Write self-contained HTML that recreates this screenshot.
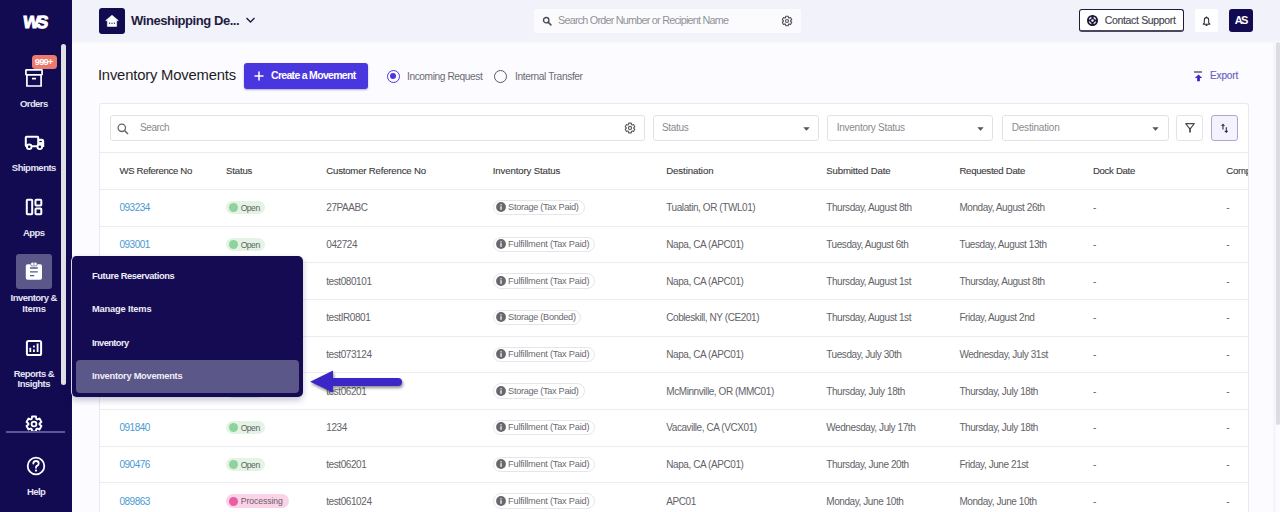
<!DOCTYPE html>
<html><head><meta charset="utf-8"><title>Inventory Movements</title>
<style>
html,body{margin:0;padding:0;}
body{width:1280px;height:512px;overflow:hidden;position:relative;background:#fcfbff;font-family:"Liberation Sans", sans-serif;}
.t{position:absolute;white-space:nowrap;line-height:1;font-family:"Liberation Sans", sans-serif;}
.b{position:absolute;}
.clip{position:absolute;overflow:hidden;}
</style></head><body>
<div class="b" style="left:71.50px;top:0.00px;width:1208.50px;height:41.00px;background:#f2f2fb"></div>
<div class="b" style="left:71.50px;top:41.00px;width:1201.30px;height:471.00px;background:#fcfbff"></div>
<div class="b" style="left:71.50px;top:41.00px;width:1201.30px;height:2.50px;background:linear-gradient(#f3f3f8,#fcfbff)"></div>
<div class="b" style="left:1272.80px;top:41.00px;width:3.20px;height:471.00px;background:#f6f5fb"></div>
<div class="b" style="left:1276.00px;top:41.70px;width:4.00px;height:383.70px;background:#dcdce2;border-radius:2px"></div>
<div class="b" style="left:99.00px;top:7.50px;width:26.00px;height:26.00px;background:#130b52;border-radius:3px"></div>
<svg class="b" style="left:103px;top:11.5px" width="18" height="18" viewBox="0 0 18 18">
<path d="M9 3.2 L15.3 8.6 L13.6 8.6 L13.6 14.4 L4.4 14.4 L4.4 8.6 L2.7 8.6 Z" fill="#fff" stroke="#fff" stroke-width="0.6" stroke-linejoin="round"/>
<circle cx="6.6" cy="11.2" r="0.65" fill="#130b52"/><circle cx="9" cy="11.2" r="0.65" fill="#130b52"/><circle cx="11.4" cy="11.2" r="0.65" fill="#130b52"/>
</svg>
<div class="t" style="left:131.00px;top:14.00px;font-size:13px;color:#1f1c40;font-weight:bold;letter-spacing:-0.444px;">Wineshipping De...</div>
<svg class="b" style="left:245px;top:16px" width="11" height="8" viewBox="0 0 11 8"><path d="M1.5 2 L5.5 6 L9.5 2" stroke="#1f1c40" stroke-width="1.4" fill="none"/></svg>
<div class="b" style="left:534.00px;top:9.00px;width:266.50px;height:23.80px;background:#fbfbfe;border-radius:2px"></div>
<svg class="b" style="left:542px;top:15.5px" width="11" height="11" viewBox="0 0 11 11"><circle cx="4.2" cy="4.2" r="2.7" stroke="#4a4a52" stroke-width="1.4" fill="none"/><path d="M6.2 6.2 L8.9 8.9" stroke="#4a4a52" stroke-width="1.6" stroke-linecap="round"/></svg>
<div class="t" style="left:558.00px;top:15.36px;font-size:10.8px;color:#929297;font-weight:normal;letter-spacing:-0.767px;">Search Order Number or Recipient Name</div>
<svg class="b" style="left:781.25px;top:14.6px" width="12" height="12" viewBox="0 0 12 12"><path d="M4.53 2.72 L4.74 1.26 L7.26 1.26 L7.47 2.72 L8.11 3.08 L9.47 2.54 L10.73 4.72 L9.58 5.63 L9.58 6.37 L10.73 7.28 L9.47 9.46 L8.11 8.92 L7.47 9.28 L7.26 10.74 L4.74 10.74 L4.53 9.28 L3.89 8.92 L2.53 9.46 L1.27 7.28 L2.42 6.37 L2.42 5.63 L1.27 4.72 L2.53 2.54 L3.89 3.08 Z" stroke="#505058" stroke-width="1.15" fill="none" stroke-linejoin="round"/><circle cx="6" cy="6" r="1.5" stroke="#505058" stroke-width="1.1" fill="none"/></svg>
<div class="b" style="left:1079.00px;top:9.00px;width:105.00px;height:23.30px;border:1.5px solid #1e1b3b;border-bottom:2px solid #4a485e;border-radius:3px;box-sizing:border-box;background:#fff"></div>
<svg class="b" style="left:1087px;top:15px" width="11" height="11" viewBox="0 0 11 11"><circle cx="5.5" cy="5.5" r="4.6" stroke="#1a1836" stroke-width="1.8" fill="none"/><circle cx="5.5" cy="5.5" r="1.9" stroke="#1a1836" stroke-width="1.3" fill="none"/><path d="M5.5 0.8 L5.5 3.6 M5.5 7.4 L5.5 10.2 M0.8 5.5 L3.6 5.5 M7.4 5.5 L10.2 5.5" stroke="#1a1836" stroke-width="2.2"/></svg>
<div class="t" style="left:1104.70px;top:15.21px;font-size:10.5px;color:#46454f;font-weight:normal;letter-spacing:-0.333px;-webkit-text-stroke:0.15px #46454f;">Contact Support</div>
<div class="b" style="left:1194.50px;top:9.00px;width:23.90px;height:23.00px;background:#fff;border-radius:2px"></div>
<svg class="b" style="left:1202px;top:15.5px" width="9" height="11" viewBox="0 0 9 11"><path d="M4.5 1.6 C2.9 1.6 2.3 2.9 2.3 4.3 L2.3 6.9 L1.2 8.2 L7.8 8.2 L6.7 6.9 L6.7 4.3 C6.7 2.9 6.1 1.6 4.5 1.6 Z" stroke="#2a2a33" stroke-width="1.05" fill="none" stroke-linejoin="round"/><path d="M4.5 0.6 L4.5 1.6 M3.6 9.4 L5.4 9.4" stroke="#2a2a33" stroke-width="1.1"/></svg>
<div class="b" style="left:1229.40px;top:9.00px;width:23.60px;height:23.00px;background:#130b52;border-radius:3px"></div>
<div class="t" style="left:1234.80px;top:14.69px;font-size:11px;color:#fff;font-weight:bold;letter-spacing:-1.844px;">AS</div>
<div class="t" style="left:97.90px;top:68.27px;font-size:14.8px;color:#1c1c1f;font-weight:normal;letter-spacing:-0.175px;">Inventory Movements</div>
<div class="b" style="left:244.00px;top:63.20px;width:124.00px;height:25.80px;background:#4a36de;border-radius:3px;box-shadow:0 1px 2px rgba(40,20,150,.35)"></div>
<svg class="b" style="left:253.5px;top:71px" width="10" height="10" viewBox="0 0 10 10"><path d="M5 0.5 L5 9.5 M0.5 5 L9.5 5" stroke="#fff" stroke-width="1.5"/></svg>
<div class="t" style="left:271.00px;top:70.21px;font-size:10.5px;color:#fff;font-weight:bold;letter-spacing:-0.693px;">Create a Movement</div>
<div class="b" style="left:386.70px;top:69.50px;width:13.20px;height:13.20px;border:1.6px solid #4a36de;border-radius:50%;box-sizing:border-box"></div>
<div class="b" style="left:390.20px;top:73.00px;width:6.20px;height:6.20px;background:#4a36de;border-radius:50%"></div>
<div class="t" style="left:407.00px;top:71.87px;font-size:10.2px;color:#6b6b70;font-weight:normal;letter-spacing:-0.419px;">Incoming Request</div>
<div class="b" style="left:493.80px;top:69.50px;width:13.40px;height:13.40px;border:1.5px solid #5a5a60;border-radius:50%;box-sizing:border-box"></div>
<div class="t" style="left:515.00px;top:71.87px;font-size:10.2px;color:#6b6b70;font-weight:normal;letter-spacing:-0.386px;">Internal Transfer</div>
<div class="b" style="left:1193.90px;top:71.10px;width:8.00px;height:1.70px;background:#85858c"></div>
<svg class="b" style="left:1193.5px;top:73.5px" width="9" height="8.5" viewBox="0 0 9 8.5"><path d="M4.5 0.4 L8.2 4 L5.9 4 L5.9 7.3 L3.1 7.3 L3.1 4 L0.8 4 Z" fill="#3c28d0"/></svg>
<div class="t" style="left:1210.00px;top:71.13px;font-size:10px;color:#6860c2;font-weight:normal;letter-spacing:-0.145px;-webkit-text-stroke:0.15px #6860c2;">Export</div>
<div class="b" style="left:98.60px;top:103.00px;width:1150.00px;height:427.00px;background:#fff;border:1px solid #e8e8ee;border-radius:3px;box-sizing:border-box"></div>
<div class="b" style="left:99.60px;top:152.00px;width:1148.00px;height:1.00px;background:#ececf0"></div>
<div class="b" style="left:110.30px;top:114.50px;width:534.30px;height:26.50px;border:1px solid #e2e2e6;border-radius:3px;box-sizing:border-box;background:#fff"></div><div class="t" style="left:140.00px;top:123.44px;font-size:10px;color:#8a8a8f;font-weight:normal;letter-spacing:-0.425px;">Search</div>
<svg class="b" style="left:116.5px;top:122.5px" width="12" height="12" viewBox="0 0 12 12"><circle cx="4.8" cy="4.8" r="3.7" stroke="#666" stroke-width="1.3" fill="none"/><path d="M7.5 7.5 L11 11" stroke="#666" stroke-width="1.5"/></svg>
<svg class="b" style="left:624px;top:122px" width="12" height="12" viewBox="0 0 12 12"><path d="M4.48 2.62 L4.72 1.17 L7.28 1.17 L7.52 2.62 L8.17 3.00 L9.54 2.47 L10.83 4.70 L9.68 5.62 L9.68 6.38 L10.83 7.30 L9.54 9.53 L8.17 9.00 L7.52 9.38 L7.28 10.83 L4.72 10.83 L4.48 9.38 L3.83 9.00 L2.46 9.53 L1.17 7.30 L2.32 6.38 L2.32 5.62 L1.17 4.70 L2.46 2.47 L3.83 3.00 Z" stroke="#5a5a60" stroke-width="1.1" fill="none" stroke-linejoin="round"/><circle cx="6" cy="6" r="1.6" stroke="#5a5a60" stroke-width="1.1" fill="none"/></svg>
<div class="b" style="left:652.50px;top:114.50px;width:166.90px;height:26.50px;border:1px solid #e2e2e6;border-radius:3px;box-sizing:border-box;background:#fff"></div><div class="t" style="left:662.00px;top:123.44px;font-size:10px;color:#8a8a8f;font-weight:normal;letter-spacing:-0.330px;">Status</div><svg class="b" style="left:803.20px;top:126.5px" width="7" height="4" viewBox="0 0 7 4"><path d="M0.3 0.3 L6.7 0.3 L3.5 3.7 Z" fill="#555"/></svg>
<div class="b" style="left:827.30px;top:114.50px;width:166.20px;height:26.50px;border:1px solid #e2e2e6;border-radius:3px;box-sizing:border-box;background:#fff"></div><div class="t" style="left:836.80px;top:123.44px;font-size:10px;color:#8a8a8f;font-weight:normal;letter-spacing:-0.271px;">Inventory Status</div><svg class="b" style="left:977.30px;top:126.5px" width="7" height="4" viewBox="0 0 7 4"><path d="M0.3 0.3 L6.7 0.3 L3.5 3.7 Z" fill="#555"/></svg>
<div class="b" style="left:1002.20px;top:114.50px;width:166.40px;height:26.50px;border:1px solid #e2e2e6;border-radius:3px;box-sizing:border-box;background:#fff"></div><div class="t" style="left:1011.70px;top:123.44px;font-size:10px;color:#8a8a8f;font-weight:normal;letter-spacing:-0.197px;">Destination</div><svg class="b" style="left:1152.40px;top:126.5px" width="7" height="4" viewBox="0 0 7 4"><path d="M0.3 0.3 L6.7 0.3 L3.5 3.7 Z" fill="#555"/></svg>
<div class="b" style="left:1176.30px;top:114.50px;width:26.70px;height:26.50px;border:1.3px solid #e4e4e8;border-radius:3px;box-sizing:border-box;background:#fff"></div>
<svg class="b" style="left:1184px;top:122px" width="12" height="12" viewBox="0 0 12 12"><path d="M1.7 1.6 L10.3 1.6 L6.6 6.4 L5.4 6.4 Z" stroke="#4a4a50" stroke-width="1.1" fill="none" stroke-linejoin="round"/><path d="M6 6.2 L6 10.6" stroke="#3a3a40" stroke-width="1.6"/></svg>
<div class="b" style="left:1211.20px;top:114.50px;width:26.80px;height:26.50px;border:1.3px solid #aaa6d6;border-radius:3px;box-sizing:border-box;background:#f4f3fd"></div>
<svg class="b" style="left:1219px;top:121.5px" width="11" height="12" viewBox="0 0 11 12"><path d="M4 7.6 L4 3.2" stroke="#2a2a50" stroke-width="1.1"/><path d="M2.5 3.6 L4 1.9 L5.5 3.6 Z" fill="#2a2a50" stroke="#2a2a50" stroke-width="0.6" stroke-linejoin="round"/><path d="M7.3 5.3 L7.3 9.5" stroke="#2a2a50" stroke-width="1.1"/><path d="M5.8 9.1 L7.3 10.8 L8.8 9.1 Z" fill="#2a2a50" stroke="#2a2a50" stroke-width="0.6" stroke-linejoin="round"/></svg>
<div class="clip" style="left:99.6px;top:153.1px;width:1148px;height:360px">
<div class="t" style="left:19.90px;top:12.87px;font-size:9.6px;color:#3b3b40;font-weight:normal;letter-spacing:-0.327px;-webkit-text-stroke:0.12px #3b3b40;">WS Reference No</div>
<div class="t" style="left:126.50px;top:12.87px;font-size:9.6px;color:#3b3b40;font-weight:normal;letter-spacing:-0.180px;-webkit-text-stroke:0.12px #3b3b40;">Status</div>
<div class="t" style="left:226.65px;top:12.87px;font-size:9.6px;color:#3b3b40;font-weight:normal;letter-spacing:-0.185px;-webkit-text-stroke:0.12px #3b3b40;">Customer Reference No</div>
<div class="t" style="left:393.20px;top:12.87px;font-size:9.6px;color:#3b3b40;font-weight:normal;letter-spacing:-0.115px;-webkit-text-stroke:0.12px #3b3b40;">Inventory Status</div>
<div class="t" style="left:566.65px;top:12.87px;font-size:9.6px;color:#3b3b40;font-weight:normal;letter-spacing:-0.076px;-webkit-text-stroke:0.12px #3b3b40;">Destination</div>
<div class="t" style="left:726.65px;top:12.87px;font-size:9.6px;color:#3b3b40;font-weight:normal;letter-spacing:-0.138px;-webkit-text-stroke:0.12px #3b3b40;">Submitted Date</div>
<div class="t" style="left:859.80px;top:12.87px;font-size:9.6px;color:#3b3b40;font-weight:normal;letter-spacing:-0.261px;-webkit-text-stroke:0.12px #3b3b40;">Requested Date</div>
<div class="t" style="left:993.30px;top:12.87px;font-size:9.6px;color:#3b3b40;font-weight:normal;letter-spacing:-0.294px;-webkit-text-stroke:0.12px #3b3b40;">Dock Date</div>
<div class="t" style="left:1126.60px;top:12.87px;font-size:9.6px;color:#3b3b40;font-weight:normal;letter-spacing:-0.200px;-webkit-text-stroke:0.12px #3b3b40;">Completed Date</div>
<div class="b" style="left:0.00px;top:35.90px;width:1148.00px;height:1.00px;background:#ececf0"></div>
<div class="t" style="left:19.90px;top:50.24px;font-size:10px;color:#4a9ad2;font-weight:normal;letter-spacing:-0.500px;">093234</div>
<div class="b" style="left:126.50px;top:47.70px;width:39.10px;height:13.50px;background:#e3f4e4;border-radius:7px"></div>
<div class="b" style="left:129.15px;top:49.95px;width:9.10px;height:9.10px;background:#90d29c;border-radius:50%"></div>
<div class="t" style="left:141.10px;top:50.72px;font-size:8.6px;color:#5f5f64;font-weight:normal;letter-spacing:-0.514px;">Open</div>
<div class="t" style="left:226.65px;top:50.24px;font-size:10px;color:#636368;font-weight:normal;letter-spacing:-0.420px;">27PAABC</div>
<div class="b" style="left:393.10px;top:46.65px;width:91.90px;height:15.40px;border:1px solid #e6e6ea;border-radius:8px;box-sizing:border-box;background:#fff"></div>
<svg class="b" style="left:396.10px;top:49.35px" width="10" height="10" viewBox="0 0 10 10"><circle cx="5" cy="5" r="4.9" fill="#67676d"/><rect x="4.4" y="4.2" width="1.25" height="3.6" fill="#fff"/><rect x="4.4" y="2.2" width="1.25" height="1.2" fill="#fff"/></svg>
<div class="t" style="left:408.50px;top:50.26px;font-size:9.2px;color:#6a6a70;font-weight:normal;letter-spacing:-0.319px;">Storage (Tax Paid)</div>
<div class="t" style="left:566.65px;top:50.24px;font-size:10px;color:#636368;font-weight:normal;letter-spacing:-0.420px;">Tualatin, OR (TWL01)</div>
<div class="t" style="left:726.65px;top:50.24px;font-size:10px;color:#636368;font-weight:normal;letter-spacing:-0.420px;">Thursday, August 8th</div>
<div class="t" style="left:859.80px;top:50.24px;font-size:10px;color:#636368;font-weight:normal;letter-spacing:-0.420px;">Monday, August 26th</div>
<div class="t" style="left:993.30px;top:50.24px;font-size:10px;color:#636368;font-weight:normal;letter-spacing:0.000px;">-</div>
<div class="t" style="left:1126.60px;top:50.24px;font-size:10px;color:#636368;font-weight:normal;letter-spacing:0.000px;">-</div>
<div class="b" style="left:0.00px;top:72.90px;width:1148.00px;height:1.00px;background:#ececf0"></div>
<div class="t" style="left:19.90px;top:87.24px;font-size:10px;color:#4a9ad2;font-weight:normal;letter-spacing:-0.500px;">093001</div>
<div class="b" style="left:126.50px;top:84.70px;width:39.10px;height:13.50px;background:#e3f4e4;border-radius:7px"></div>
<div class="b" style="left:129.15px;top:86.95px;width:9.10px;height:9.10px;background:#90d29c;border-radius:50%"></div>
<div class="t" style="left:141.10px;top:87.72px;font-size:8.6px;color:#5f5f64;font-weight:normal;letter-spacing:-0.514px;">Open</div>
<div class="t" style="left:226.65px;top:87.24px;font-size:10px;color:#636368;font-weight:normal;letter-spacing:-0.420px;">042724</div>
<div class="b" style="left:393.10px;top:83.65px;width:102.30px;height:15.40px;border:1px solid #e6e6ea;border-radius:8px;box-sizing:border-box;background:#fff"></div>
<svg class="b" style="left:396.10px;top:86.35px" width="10" height="10" viewBox="0 0 10 10"><circle cx="5" cy="5" r="4.9" fill="#67676d"/><rect x="4.4" y="4.2" width="1.25" height="3.6" fill="#fff"/><rect x="4.4" y="2.2" width="1.25" height="1.2" fill="#fff"/></svg>
<div class="t" style="left:408.50px;top:87.26px;font-size:9.2px;color:#6a6a70;font-weight:normal;letter-spacing:-0.210px;">Fulfillment (Tax Paid)</div>
<div class="t" style="left:566.65px;top:87.24px;font-size:10px;color:#636368;font-weight:normal;letter-spacing:-0.420px;">Napa, CA (APC01)</div>
<div class="t" style="left:726.65px;top:87.24px;font-size:10px;color:#636368;font-weight:normal;letter-spacing:-0.420px;">Tuesday, August 6th</div>
<div class="t" style="left:859.80px;top:87.24px;font-size:10px;color:#636368;font-weight:normal;letter-spacing:-0.420px;">Tuesday, August 13th</div>
<div class="t" style="left:993.30px;top:87.24px;font-size:10px;color:#636368;font-weight:normal;letter-spacing:0.000px;">-</div>
<div class="t" style="left:1126.60px;top:87.24px;font-size:10px;color:#636368;font-weight:normal;letter-spacing:0.000px;">-</div>
<div class="b" style="left:0.00px;top:109.40px;width:1148.00px;height:1.00px;background:#ececf0"></div>
<div class="t" style="left:19.90px;top:123.74px;font-size:10px;color:#4a9ad2;font-weight:normal;letter-spacing:-0.500px;">093000</div>
<div class="b" style="left:126.50px;top:121.20px;width:39.10px;height:13.50px;background:#e3f4e4;border-radius:7px"></div>
<div class="b" style="left:129.15px;top:123.45px;width:9.10px;height:9.10px;background:#90d29c;border-radius:50%"></div>
<div class="t" style="left:141.10px;top:124.22px;font-size:8.6px;color:#5f5f64;font-weight:normal;letter-spacing:-0.514px;">Open</div>
<div class="t" style="left:226.65px;top:123.74px;font-size:10px;color:#636368;font-weight:normal;letter-spacing:-0.420px;">test080101</div>
<div class="b" style="left:393.10px;top:120.15px;width:102.30px;height:15.40px;border:1px solid #e6e6ea;border-radius:8px;box-sizing:border-box;background:#fff"></div>
<svg class="b" style="left:396.10px;top:122.85px" width="10" height="10" viewBox="0 0 10 10"><circle cx="5" cy="5" r="4.9" fill="#67676d"/><rect x="4.4" y="4.2" width="1.25" height="3.6" fill="#fff"/><rect x="4.4" y="2.2" width="1.25" height="1.2" fill="#fff"/></svg>
<div class="t" style="left:408.50px;top:123.76px;font-size:9.2px;color:#6a6a70;font-weight:normal;letter-spacing:-0.210px;">Fulfillment (Tax Paid)</div>
<div class="t" style="left:566.65px;top:123.74px;font-size:10px;color:#636368;font-weight:normal;letter-spacing:-0.420px;">Napa, CA (APC01)</div>
<div class="t" style="left:726.65px;top:123.74px;font-size:10px;color:#636368;font-weight:normal;letter-spacing:-0.420px;">Thursday, August 1st</div>
<div class="t" style="left:859.80px;top:123.74px;font-size:10px;color:#636368;font-weight:normal;letter-spacing:-0.420px;">Thursday, August 8th</div>
<div class="t" style="left:993.30px;top:123.74px;font-size:10px;color:#636368;font-weight:normal;letter-spacing:0.000px;">-</div>
<div class="t" style="left:1126.60px;top:123.74px;font-size:10px;color:#636368;font-weight:normal;letter-spacing:0.000px;">-</div>
<div class="b" style="left:0.00px;top:145.90px;width:1148.00px;height:1.00px;background:#ececf0"></div>
<div class="t" style="left:19.90px;top:160.24px;font-size:10px;color:#4a9ad2;font-weight:normal;letter-spacing:-0.500px;">092999</div>
<div class="b" style="left:126.50px;top:157.70px;width:39.10px;height:13.50px;background:#e3f4e4;border-radius:7px"></div>
<div class="b" style="left:129.15px;top:159.95px;width:9.10px;height:9.10px;background:#90d29c;border-radius:50%"></div>
<div class="t" style="left:141.10px;top:160.72px;font-size:8.6px;color:#5f5f64;font-weight:normal;letter-spacing:-0.514px;">Open</div>
<div class="t" style="left:226.65px;top:160.24px;font-size:10px;color:#636368;font-weight:normal;letter-spacing:-0.420px;">testIR0801</div>
<div class="b" style="left:393.10px;top:156.65px;width:88.60px;height:15.40px;border:1px solid #e6e6ea;border-radius:8px;box-sizing:border-box;background:#fff"></div>
<svg class="b" style="left:396.10px;top:159.35px" width="10" height="10" viewBox="0 0 10 10"><circle cx="5" cy="5" r="4.9" fill="#67676d"/><rect x="4.4" y="4.2" width="1.25" height="3.6" fill="#fff"/><rect x="4.4" y="2.2" width="1.25" height="1.2" fill="#fff"/></svg>
<div class="t" style="left:408.50px;top:160.26px;font-size:9.2px;color:#6a6a70;font-weight:normal;letter-spacing:-0.311px;">Storage (Bonded)</div>
<div class="t" style="left:566.65px;top:160.24px;font-size:10px;color:#636368;font-weight:normal;letter-spacing:-0.420px;">Cobleskill, NY (CE201)</div>
<div class="t" style="left:726.65px;top:160.24px;font-size:10px;color:#636368;font-weight:normal;letter-spacing:-0.420px;">Thursday, August 1st</div>
<div class="t" style="left:859.80px;top:160.24px;font-size:10px;color:#636368;font-weight:normal;letter-spacing:-0.420px;">Friday, August 2nd</div>
<div class="t" style="left:993.30px;top:160.24px;font-size:10px;color:#636368;font-weight:normal;letter-spacing:0.000px;">-</div>
<div class="t" style="left:1126.60px;top:160.24px;font-size:10px;color:#636368;font-weight:normal;letter-spacing:0.000px;">-</div>
<div class="b" style="left:0.00px;top:182.90px;width:1148.00px;height:1.00px;background:#ececf0"></div>
<div class="t" style="left:19.90px;top:197.24px;font-size:10px;color:#4a9ad2;font-weight:normal;letter-spacing:-0.500px;">092998</div>
<div class="b" style="left:126.50px;top:194.70px;width:39.10px;height:13.50px;background:#e3f4e4;border-radius:7px"></div>
<div class="b" style="left:129.15px;top:196.95px;width:9.10px;height:9.10px;background:#90d29c;border-radius:50%"></div>
<div class="t" style="left:141.10px;top:197.72px;font-size:8.6px;color:#5f5f64;font-weight:normal;letter-spacing:-0.514px;">Open</div>
<div class="t" style="left:226.65px;top:197.24px;font-size:10px;color:#636368;font-weight:normal;letter-spacing:-0.420px;">test073124</div>
<div class="b" style="left:393.10px;top:193.65px;width:102.30px;height:15.40px;border:1px solid #e6e6ea;border-radius:8px;box-sizing:border-box;background:#fff"></div>
<svg class="b" style="left:396.10px;top:196.35px" width="10" height="10" viewBox="0 0 10 10"><circle cx="5" cy="5" r="4.9" fill="#67676d"/><rect x="4.4" y="4.2" width="1.25" height="3.6" fill="#fff"/><rect x="4.4" y="2.2" width="1.25" height="1.2" fill="#fff"/></svg>
<div class="t" style="left:408.50px;top:197.26px;font-size:9.2px;color:#6a6a70;font-weight:normal;letter-spacing:-0.210px;">Fulfillment (Tax Paid)</div>
<div class="t" style="left:566.65px;top:197.24px;font-size:10px;color:#636368;font-weight:normal;letter-spacing:-0.420px;">Napa, CA (APC01)</div>
<div class="t" style="left:726.65px;top:197.24px;font-size:10px;color:#636368;font-weight:normal;letter-spacing:-0.420px;">Tuesday, July 30th</div>
<div class="t" style="left:859.80px;top:197.24px;font-size:10px;color:#636368;font-weight:normal;letter-spacing:-0.420px;">Wednesday, July 31st</div>
<div class="t" style="left:993.30px;top:197.24px;font-size:10px;color:#636368;font-weight:normal;letter-spacing:0.000px;">-</div>
<div class="t" style="left:1126.60px;top:197.24px;font-size:10px;color:#636368;font-weight:normal;letter-spacing:0.000px;">-</div>
<div class="b" style="left:0.00px;top:219.40px;width:1148.00px;height:1.00px;background:#ececf0"></div>
<div class="t" style="left:19.90px;top:233.74px;font-size:10px;color:#4a9ad2;font-weight:normal;letter-spacing:-0.500px;">092997</div>
<div class="b" style="left:126.50px;top:231.20px;width:39.10px;height:13.50px;background:#e3f4e4;border-radius:7px"></div>
<div class="b" style="left:129.15px;top:233.45px;width:9.10px;height:9.10px;background:#90d29c;border-radius:50%"></div>
<div class="t" style="left:141.10px;top:234.22px;font-size:8.6px;color:#5f5f64;font-weight:normal;letter-spacing:-0.514px;">Open</div>
<div class="t" style="left:226.65px;top:233.74px;font-size:10px;color:#636368;font-weight:normal;letter-spacing:-0.420px;">test06201</div>
<div class="b" style="left:393.10px;top:230.15px;width:91.90px;height:15.40px;border:1px solid #e6e6ea;border-radius:8px;box-sizing:border-box;background:#fff"></div>
<svg class="b" style="left:396.10px;top:232.85px" width="10" height="10" viewBox="0 0 10 10"><circle cx="5" cy="5" r="4.9" fill="#67676d"/><rect x="4.4" y="4.2" width="1.25" height="3.6" fill="#fff"/><rect x="4.4" y="2.2" width="1.25" height="1.2" fill="#fff"/></svg>
<div class="t" style="left:408.50px;top:233.76px;font-size:9.2px;color:#6a6a70;font-weight:normal;letter-spacing:-0.319px;">Storage (Tax Paid)</div>
<div class="t" style="left:566.65px;top:233.74px;font-size:10px;color:#636368;font-weight:normal;letter-spacing:-0.420px;">McMinnville, OR (MMC01)</div>
<div class="t" style="left:726.65px;top:233.74px;font-size:10px;color:#636368;font-weight:normal;letter-spacing:-0.420px;">Thursday, July 18th</div>
<div class="t" style="left:859.80px;top:233.74px;font-size:10px;color:#636368;font-weight:normal;letter-spacing:-0.420px;">Thursday, July 18th</div>
<div class="t" style="left:993.30px;top:233.74px;font-size:10px;color:#636368;font-weight:normal;letter-spacing:0.000px;">-</div>
<div class="t" style="left:1126.60px;top:233.74px;font-size:10px;color:#636368;font-weight:normal;letter-spacing:0.000px;">-</div>
<div class="b" style="left:0.00px;top:255.90px;width:1148.00px;height:1.00px;background:#ececf0"></div>
<div class="t" style="left:19.90px;top:270.24px;font-size:10px;color:#4a9ad2;font-weight:normal;letter-spacing:-0.500px;">091840</div>
<div class="b" style="left:126.50px;top:267.70px;width:39.10px;height:13.50px;background:#e3f4e4;border-radius:7px"></div>
<div class="b" style="left:129.15px;top:269.95px;width:9.10px;height:9.10px;background:#90d29c;border-radius:50%"></div>
<div class="t" style="left:141.10px;top:270.72px;font-size:8.6px;color:#5f5f64;font-weight:normal;letter-spacing:-0.514px;">Open</div>
<div class="t" style="left:226.65px;top:270.24px;font-size:10px;color:#636368;font-weight:normal;letter-spacing:-0.420px;">1234</div>
<div class="b" style="left:393.10px;top:266.65px;width:102.30px;height:15.40px;border:1px solid #e6e6ea;border-radius:8px;box-sizing:border-box;background:#fff"></div>
<svg class="b" style="left:396.10px;top:269.35px" width="10" height="10" viewBox="0 0 10 10"><circle cx="5" cy="5" r="4.9" fill="#67676d"/><rect x="4.4" y="4.2" width="1.25" height="3.6" fill="#fff"/><rect x="4.4" y="2.2" width="1.25" height="1.2" fill="#fff"/></svg>
<div class="t" style="left:408.50px;top:270.26px;font-size:9.2px;color:#6a6a70;font-weight:normal;letter-spacing:-0.210px;">Fulfillment (Tax Paid)</div>
<div class="t" style="left:566.65px;top:270.24px;font-size:10px;color:#636368;font-weight:normal;letter-spacing:-0.420px;">Vacaville, CA (VCX01)</div>
<div class="t" style="left:726.65px;top:270.24px;font-size:10px;color:#636368;font-weight:normal;letter-spacing:-0.420px;">Wednesday, July 17th</div>
<div class="t" style="left:859.80px;top:270.24px;font-size:10px;color:#636368;font-weight:normal;letter-spacing:-0.420px;">Thursday, July 18th</div>
<div class="t" style="left:993.30px;top:270.24px;font-size:10px;color:#636368;font-weight:normal;letter-spacing:0.000px;">-</div>
<div class="t" style="left:1126.60px;top:270.24px;font-size:10px;color:#636368;font-weight:normal;letter-spacing:0.000px;">-</div>
<div class="b" style="left:0.00px;top:292.90px;width:1148.00px;height:1.00px;background:#ececf0"></div>
<div class="t" style="left:19.90px;top:307.24px;font-size:10px;color:#4a9ad2;font-weight:normal;letter-spacing:-0.500px;">090476</div>
<div class="b" style="left:126.50px;top:304.70px;width:39.10px;height:13.50px;background:#e3f4e4;border-radius:7px"></div>
<div class="b" style="left:129.15px;top:306.95px;width:9.10px;height:9.10px;background:#90d29c;border-radius:50%"></div>
<div class="t" style="left:141.10px;top:307.72px;font-size:8.6px;color:#5f5f64;font-weight:normal;letter-spacing:-0.514px;">Open</div>
<div class="t" style="left:226.65px;top:307.24px;font-size:10px;color:#636368;font-weight:normal;letter-spacing:-0.420px;">test06201</div>
<div class="b" style="left:393.10px;top:303.65px;width:102.30px;height:15.40px;border:1px solid #e6e6ea;border-radius:8px;box-sizing:border-box;background:#fff"></div>
<svg class="b" style="left:396.10px;top:306.35px" width="10" height="10" viewBox="0 0 10 10"><circle cx="5" cy="5" r="4.9" fill="#67676d"/><rect x="4.4" y="4.2" width="1.25" height="3.6" fill="#fff"/><rect x="4.4" y="2.2" width="1.25" height="1.2" fill="#fff"/></svg>
<div class="t" style="left:408.50px;top:307.26px;font-size:9.2px;color:#6a6a70;font-weight:normal;letter-spacing:-0.210px;">Fulfillment (Tax Paid)</div>
<div class="t" style="left:566.65px;top:307.24px;font-size:10px;color:#636368;font-weight:normal;letter-spacing:-0.420px;">Napa, CA (APC01)</div>
<div class="t" style="left:726.65px;top:307.24px;font-size:10px;color:#636368;font-weight:normal;letter-spacing:-0.420px;">Thursday, June 20th</div>
<div class="t" style="left:859.80px;top:307.24px;font-size:10px;color:#636368;font-weight:normal;letter-spacing:-0.420px;">Friday, June 21st</div>
<div class="t" style="left:993.30px;top:307.24px;font-size:10px;color:#636368;font-weight:normal;letter-spacing:0.000px;">-</div>
<div class="t" style="left:1126.60px;top:307.24px;font-size:10px;color:#636368;font-weight:normal;letter-spacing:0.000px;">-</div>
<div class="b" style="left:0.00px;top:329.40px;width:1148.00px;height:1.00px;background:#ececf0"></div>
<div class="t" style="left:19.90px;top:343.74px;font-size:10px;color:#4a9ad2;font-weight:normal;letter-spacing:-0.500px;">089863</div>
<div class="b" style="left:126.50px;top:341.20px;width:62.50px;height:13.50px;background:#fbd2e7;border-radius:7px"></div>
<div class="b" style="left:129.15px;top:343.45px;width:9.10px;height:9.10px;background:#ea5ca4;border-radius:50%"></div>
<div class="t" style="left:141.10px;top:344.22px;font-size:8.6px;color:#5f5f64;font-weight:normal;letter-spacing:-0.037px;">Processing</div>
<div class="t" style="left:226.65px;top:343.74px;font-size:10px;color:#636368;font-weight:normal;letter-spacing:-0.420px;">test061024</div>
<div class="b" style="left:393.10px;top:340.15px;width:102.30px;height:15.40px;border:1px solid #e6e6ea;border-radius:8px;box-sizing:border-box;background:#fff"></div>
<svg class="b" style="left:396.10px;top:342.85px" width="10" height="10" viewBox="0 0 10 10"><circle cx="5" cy="5" r="4.9" fill="#67676d"/><rect x="4.4" y="4.2" width="1.25" height="3.6" fill="#fff"/><rect x="4.4" y="2.2" width="1.25" height="1.2" fill="#fff"/></svg>
<div class="t" style="left:408.50px;top:343.76px;font-size:9.2px;color:#6a6a70;font-weight:normal;letter-spacing:-0.210px;">Fulfillment (Tax Paid)</div>
<div class="t" style="left:566.65px;top:343.74px;font-size:10px;color:#636368;font-weight:normal;letter-spacing:-0.420px;">APC01</div>
<div class="t" style="left:726.65px;top:343.74px;font-size:10px;color:#636368;font-weight:normal;letter-spacing:-0.420px;">Monday, June 10th</div>
<div class="t" style="left:859.80px;top:343.74px;font-size:10px;color:#636368;font-weight:normal;letter-spacing:-0.420px;">Monday, June 10th</div>
<div class="t" style="left:993.30px;top:343.74px;font-size:10px;color:#636368;font-weight:normal;letter-spacing:0.000px;">-</div>
<div class="t" style="left:1126.60px;top:343.74px;font-size:10px;color:#636368;font-weight:normal;letter-spacing:0.000px;">-</div>
</div>
<div class="b" style="left:0.00px;top:0.00px;width:71.50px;height:512.00px;background:#130b52"></div>
<div class="b" style="left:60.80px;top:44.10px;width:5.10px;height:340.90px;background:#e0e0e6;border-radius:3px"></div>
<div class="t" style="left:22.20px;top:14.10px;font-size:17.6px;color:#fff;font-weight:bold;letter-spacing:-3.006px;-webkit-text-stroke:1px #fff;transform:skewX(-6deg);transform-origin:0 100%;">WS</div>
<div class="b" style="left:32.30px;top:55.30px;width:24.70px;height:13.40px;background:#ea7a6e;border-radius:3.5px"></div>
<div class="t" style="left:34.80px;top:57.34px;font-size:9.4px;color:#fff;font-weight:bold;letter-spacing:-0.881px;">999+</div>
<svg class="b" style="left:24px;top:68px" width="20" height="20" viewBox="0 0 20 20"><rect x="1.9" y="1.8" width="16.2" height="5" rx="0.6" stroke="#fff" stroke-width="1.7" fill="none"/><path d="M2.9 6.8 L2.9 18 L17.1 18 L17.1 6.8" stroke="#fff" stroke-width="1.7" fill="none"/><path d="M8 10.6 L12 10.6" stroke="#fff" stroke-width="1.7"/></svg>
<div class="t" style="left:20.00px;top:98.56px;font-size:9.5px;color:#e6e5f3;font-weight:bold;letter-spacing:-0.594px;">Orders</div>
<svg class="b" style="left:23.5px;top:134px" width="22" height="17" viewBox="0 0 22 17"><rect x="1.8" y="2.7" width="12.4" height="9.6" rx="0.8" stroke="#fff" stroke-width="2" fill="none"/><path d="M14.2 4.7 L17.6 4.7 Q20.2 4.7 20.2 7.6 L20.2 13.1 L14.2 13.1 Z" fill="#fff"/><rect x="15.4" y="6.9" width="2.4" height="1.2" fill="#130b52"/><circle cx="5.2" cy="12.8" r="2.3" fill="#130b52" stroke="#fff" stroke-width="1.9"/><circle cx="15.8" cy="12.8" r="2.3" fill="#130b52" stroke="#fff" stroke-width="1.9"/></svg>
<div class="t" style="left:11.80px;top:163.36px;font-size:9.5px;color:#e6e5f3;font-weight:bold;letter-spacing:-0.497px;">Shipments</div>
<svg class="b" style="left:25px;top:198px" width="18" height="18" viewBox="0 0 18 18"><rect x="1.8" y="1.8" width="5.4" height="14.4" rx="0.8" stroke="#fff" stroke-width="2" fill="none"/><rect x="10.5" y="1.8" width="5.8" height="5.8" rx="0.8" stroke="#fff" stroke-width="2" fill="none"/><rect x="10.5" y="10.4" width="5.8" height="5.8" rx="0.8" stroke="#fff" stroke-width="2" fill="none"/></svg>
<div class="t" style="left:23.10px;top:228.16px;font-size:9.5px;color:#e6e5f3;font-weight:bold;letter-spacing:-0.589px;">Apps</div>
<div class="b" style="left:16.40px;top:254.40px;width:35.50px;height:34.60px;background:#5b5789;border-radius:3px"></div>
<svg class="b" style="left:25px;top:262px" width="18" height="19" viewBox="0 0 18 19"><rect x="0.8" y="2.2" width="16.2" height="15.6" rx="1.8" fill="#fff"/><rect x="5.6" y="0.3" width="6.6" height="3.6" rx="1.6" fill="#fff" stroke="#5b5789" stroke-width="0.7"/><circle cx="8.9" cy="1.9" r="0.7" fill="#5b5789"/><path d="M5 6 L12.8 6 M5 9.9 L12.8 9.9 M5 13.6 L9.2 13.6" stroke="#5b5789" stroke-width="1.3"/></svg>
<div class="t" style="left:10.60px;top:293.21px;font-size:9.5px;color:#e6e5f3;font-weight:bold;letter-spacing:-0.550px;">Inventory &amp;</div>
<div class="t" style="left:22.30px;top:303.96px;font-size:9.5px;color:#e6e5f3;font-weight:bold;letter-spacing:-0.258px;">Items</div>
<svg class="b" style="left:25px;top:339px" width="18" height="18" viewBox="0 0 18 18"><rect x="1.9" y="1.9" width="14.2" height="14.2" rx="1.6" stroke="#fff" stroke-width="2" fill="none"/><path d="M5.3 8.8 L5.3 13.1 M8.9 10.4 L8.9 13.1 M12.6 4.6 L12.6 13.1" stroke="#fff" stroke-width="1.8"/><rect x="8" y="6.6" width="1.8" height="1.8" fill="#fff"/></svg>
<div class="t" style="left:13.75px;top:368.56px;font-size:9.5px;color:#e6e5f3;font-weight:bold;letter-spacing:-0.567px;">Reports &amp;</div>
<div class="t" style="left:17.50px;top:379.16px;font-size:9.5px;color:#e6e5f3;font-weight:bold;letter-spacing:-0.476px;">Insights</div>
<svg class="b" style="left:24.9px;top:414.6px" width="18" height="18" viewBox="0 0 18 18"><path d="M6.71 3.89 L7.02 1.56 L10.98 1.56 L11.29 3.89 L12.28 4.46 L14.46 3.57 L16.43 6.99 L14.57 8.43 L14.57 9.57 L16.43 11.01 L14.46 14.43 L12.28 13.54 L11.29 14.11 L10.98 16.44 L7.02 16.44 L6.71 14.11 L5.72 13.54 L3.54 14.43 L1.57 11.01 L3.43 9.57 L3.43 8.43 L1.57 6.99 L3.54 3.57 L5.72 4.46 Z" stroke="#fff" stroke-width="1.9" fill="none" stroke-linejoin="round"/><circle cx="9" cy="9" r="2.4" stroke="#fff" stroke-width="1.8" fill="none"/></svg>
<div class="b" style="left:6.25px;top:431.00px;width:59.05px;height:2.00px;background:#5b5798"></div>
<svg class="b" style="left:26px;top:456px" width="20" height="20" viewBox="0 0 20 20"><circle cx="10" cy="10" r="8.3" stroke="#fff" stroke-width="1.8" fill="none"/><path d="M7.3 7.6 Q7.3 5 10 5 Q12.7 5 12.7 7.4 Q12.7 9 10.9 9.9 Q10 10.4 10 11.8" stroke="#fff" stroke-width="1.8" fill="none" stroke-linecap="round"/><circle cx="10" cy="14.6" r="1.1" fill="#fff"/></svg>
<div class="t" style="left:26.90px;top:486.96px;font-size:9.5px;color:#e6e5f3;font-weight:bold;letter-spacing:-0.561px;">Help</div>
<div class="b" style="left:70.60px;top:255.60px;width:232.70px;height:141.40px;background:#140b52;border-radius:5px;box-shadow:0 3px 6px rgba(20,10,80,.25);border-left:1px solid #d9d8e6;box-sizing:border-box"></div>
<div class="b" style="left:75.80px;top:359.90px;width:223.20px;height:32.70px;background:#5b5789;border-radius:4px"></div>
<div class="t" style="left:92.00px;top:271.53px;font-size:9.3px;color:#efeef6;font-weight:bold;letter-spacing:-0.401px;">Future Reservations</div>
<div class="t" style="left:92.00px;top:305.13px;font-size:9.3px;color:#efeef6;font-weight:bold;letter-spacing:-0.174px;">Manage Items</div>
<div class="t" style="left:92.00px;top:338.93px;font-size:9.3px;color:#efeef6;font-weight:bold;letter-spacing:-0.584px;">Inventory</div>
<div class="t" style="left:92.00px;top:371.53px;font-size:9.3px;color:#efeef6;font-weight:bold;letter-spacing:-0.278px;">Inventory Movements</div>
<svg class="b" style="left:300px;top:360px;overflow:visible" width="110" height="45" viewBox="0 0 110 45">
<defs><filter id="sh" x="-20%" y="-50%" width="140%" height="200%"><feGaussianBlur in="SourceAlpha" stdDeviation="1.6"/><feOffset dx="0.5" dy="2.2"/><feComponentTransfer><feFuncA type="linear" slope="0.45"/></feComponentTransfer><feMerge><feMergeNode/><feMergeNode in="SourceGraphic"/></feMerge></filter></defs>
<g filter="url(#sh)"><path d="M10.1 21.8 L33 10.5 L33 32.5 Z" fill="#3b26c6"/><path d="M32 22 L98 22" stroke="#3b26c6" stroke-width="8" stroke-linecap="round"/></g></svg>
</body></html>
